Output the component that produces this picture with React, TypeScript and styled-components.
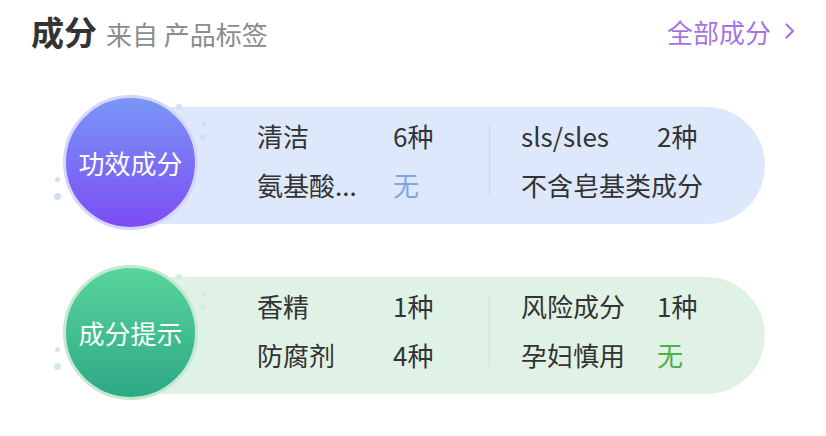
import React from "react";
import styled, { createGlobalStyle } from "styled-components";

const Global = createGlobalStyle`
  html, body { margin: 0; padding: 0; background: #ffffff; }
  body { font-family: "Noto Sans CJK SC", "Noto Sans", sans-serif; color: #333; }
`;

const Page = styled.div`
  width: 826px;
  height: 436px;
  overflow: hidden;
  background: #fff;
`;

const Header = styled.div`
  height: 62px;
  display: flex;
  align-items: center;
  justify-content: space-between;
  padding: 0 30px 0 31px;
`;

const TitleGroup = styled.div`
  display: flex;
  align-items: baseline;
  gap: 9px;
`;

const Title = styled.span`
  font-size: 33px;
  font-weight: 700;
  color: #333;
`;

const Sub = styled.span`
  font-size: 26px;
  color: #8c8c8c;
`;

const MoreLink = styled.div`
  display: flex;
  align-items: center;
  gap: 13px;
  font-size: 26px;
  color: #a674e2;
`;

const Cards = styled.div`
  display: flex;
  flex-direction: column;
  gap: 35px;
  padding: 33px 61px 0 63px;
`;

const Card = styled.div`
  display: flex;
  align-items: center;
  height: 135px;
`;

const CircleWrap = styled.div`
  position: relative;
  z-index: 1;
  width: 135px;
  height: 135px;
  flex: none;
`;

const Circle = styled.div<{ $from: string; $to: string; $ring: string }>`
  width: 135px;
  height: 135px;
  box-sizing: border-box;
  border-radius: 50%;
  border: 3px solid ${(p) => p.$ring};
  background: linear-gradient(180deg, ${(p) => p.$from}, ${(p) => p.$to});
  display: flex;
  align-items: center;
  justify-content: center;
  color: #fff;
  font-size: 26px;
`;

const Dot = styled.span<{ $c: string; $s: number; $x: number; $y: number }>`
  position: absolute;
  left: ${(p) => p.$x}px;
  top: ${(p) => p.$y}px;
  width: ${(p) => p.$s}px;
  height: ${(p) => p.$s}px;
  border-radius: 50%;
  background: ${(p) => p.$c};
`;

const Pill = styled.div<{ $bg: string }>`
  flex: 1;
  margin-left: -70px;
  height: 117px;
  box-sizing: border-box;
  margin-top: 5px;
  background: ${(p) => p.$bg};
  border-radius: 0 58.5px 58.5px 0;
  display: flex;
  align-items: center;
  padding: 0 0 10px 129px;
`;

const Group = styled.div`
  display: grid;
  grid-template-columns: 136px auto;
  grid-auto-rows: 49px;
  align-items: center;
  font-size: 26px;
  color: #333;
  white-space: nowrap;
`;

const LeftGroup = styled(Group)`
  width: 232px;
`;

const Divider = styled.div<{ $c: string }>`
  width: 1px;
  height: 74px;
  background: ${(p) => p.$c};
  margin-right: 31px;
`;

const Value = styled.span<{ $c?: string }>`
  color: ${(p) => p.$c || "#333"};
`;

const Wide = styled.span`
  grid-column: 1 / span 2;
`;

type Row = [string, string, string?];

interface CardProps {
  label: string;
  from: string;
  to: string;
  ring: string;
  dot: string;
  bg: string;
  div: string;
  left: Row[];
  right: Row[];
}

const dots = [
  { x: 113, y: 9, s: 6 },
  { x: 138, y: 26, s: 5 },
  { x: 137, y: 39, s: 6 },
  { x: -8, y: 82, s: 5 },
  { x: -9, y: 98, s: 7 },
];

const Rows: React.FC<{ rows: Row[] }> = ({ rows }) => (
  <>
    {rows.map(([k, v, c]) =>
      v ? (
        <React.Fragment key={k}>
          <span>{k}</span>
          <Value $c={c}>{v}</Value>
        </React.Fragment>
      ) : (
        <Wide key={k}>{k}</Wide>
      )
    )}
  </>
);

const InfoCard: React.FC<CardProps> = (p) => (
  <Card>
    <CircleWrap>
      {dots.map((d, i) => (
        <Dot key={i} $c={p.dot} $s={d.s} $x={d.x} $y={d.y} />
      ))}
      <Circle $from={p.from} $to={p.to} $ring={p.ring}>
        {p.label}
      </Circle>
    </CircleWrap>
    <Pill $bg={p.bg}>
      <LeftGroup>
        <Rows rows={p.left} />
      </LeftGroup>
      <Divider $c={p.div} />
      <Group>
        <Rows rows={p.right} />
      </Group>
    </Pill>
  </Card>
);

export default function App() {
  return (
    <Page>
      <Global />
      <Header>
        <TitleGroup>
          <Title>成分</Title>
          <Sub>来自 产品标签</Sub>
        </TitleGroup>
        <MoreLink>
          全部成分
          <svg width="12" height="18" viewBox="0 0 12 18" fill="none">
            <path d="M2.5 2.5 L9 9 L2.5 15.5" stroke="#a674e2" strokeWidth="2.2" strokeLinecap="round" strokeLinejoin="round" />
          </svg>
        </MoreLink>
      </Header>
      <Cards>
        <InfoCard
          label="功效成分"
          from="#7996f6"
          to="#7c4cf4"
          ring="#d6d6fa"
          dot="#d3def6"
          bg="#dee8fc"
          div="#c9d8f2"
          left={[
            ["清洁", "6种"],
            ["氨基酸...", "无", "#7ea6e6"],
          ]}
          right={[["sls/sles", "2种"], ["不含皂基类成分", ""]]}
        />
        <InfoCard
          label="成分提示"
          from="#58d59b"
          to="#2ea886"
          ring="#c3ead0"
          dot="#cdeedb"
          bg="#e0f2e5"
          div="#cfe3d6"
          left={[
            ["香精", "1种"],
            ["防腐剂", "4种"],
          ]}
          right={[
            ["风险成分", "1种"],
            ["孕妇慎用", "无", "#4caf50"],
          ]}
        />
      </Cards>
    </Page>
  );
}
